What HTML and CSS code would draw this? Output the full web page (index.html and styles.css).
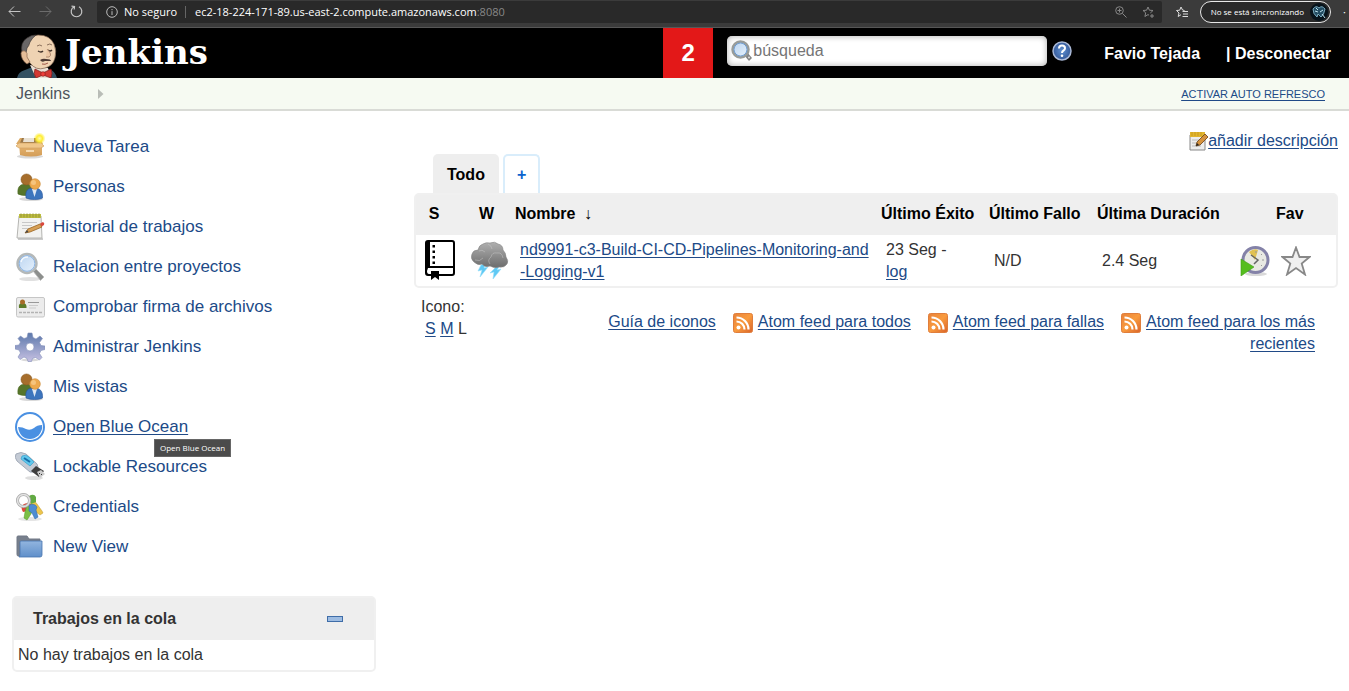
FILE: index.html
```html
<!DOCTYPE html>
<html lang="es">
<head>
<meta charset="utf-8">
<title>Panel de control [Jenkins]</title>
<link rel="stylesheet" href="styles.css">
</head>
<body>
<svg class="defs" width="0" height="0" aria-hidden="true">
  <defs>
    <linearGradient id="g-lens" x1="0" y1="0" x2="1" y2="1"><stop offset="0" stop-color="#b9d3f0"/><stop offset="1" stop-color="#e9f3fc"/></linearGradient>
    <linearGradient id="g-gear" x1="0" y1="0" x2="0" y2="1"><stop offset="0" stop-color="#5c79ab"/><stop offset="1" stop-color="#c6c0e2"/></linearGradient>
    <linearGradient id="g-folder" x1="0" y1="0" x2="0" y2="1"><stop offset="0" stop-color="#92b5df"/><stop offset="1" stop-color="#5f8fca"/></linearGradient>
    <linearGradient id="g-cloud" x1="0" y1="0" x2="0" y2="1"><stop offset="0" stop-color="#b0b0b0"/><stop offset="1" stop-color="#6c6c6c"/></linearGradient>
    <linearGradient id="g-rss" x1="0" y1="0" x2="1" y2="1"><stop offset="0" stop-color="#e8823a"/><stop offset=".5" stop-color="#f99b3e"/><stop offset="1" stop-color="#d9632a"/></linearGradient>
    <linearGradient id="g-box" x1="0" y1="0" x2="0" y2="1"><stop offset="0" stop-color="#e9b872"/><stop offset="1" stop-color="#d39d58"/></linearGradient>
    <radialGradient id="g-glow"><stop offset="0" stop-color="#fffbb0"/><stop offset=".5" stop-color="#ffee35"/><stop offset="1" stop-color="#ffee35" stop-opacity="0"/></radialGradient>
    <radialGradient id="g-help"><stop offset="0" stop-color="#5e8fd0"/><stop offset="1" stop-color="#34599a"/></radialGradient>
    <symbol id="i-people" viewBox="0 0 30 30">
      <ellipse cx="16" cy="27" rx="12" ry="2" fill="#000" opacity=".15"/>
      <path d="M3 22c-1-8 3-10 8-10 6 0 9 4 8 10-4 2-12 2-16 0z" fill="#56752a" stroke="#4a6820" stroke-width=".6"/>
      <circle cx="11.500" cy="7.500" r="5.500" fill="#a66e2c" stroke="#8c5a20" stroke-width=".6"/>
      <path d="M11 26c-1-8 2-10 8-10s9 3 8.500 10c-4 2-12 2-16.500 0z" fill="#3d75bd" stroke="#28569b" stroke-width=".6"/>
      <path d="M17 17l2.500 8 2.500-8z" fill="#dfe8f3"/>
      <circle cx="20" cy="12" r="5.300" fill="#eda94e" stroke="#c98836" stroke-width=".6"/>
      <circle cx="18.500" cy="10.500" r="2.500" fill="#f8cb8a" opacity=".8"/>
    </symbol>
    <symbol id="i-note" viewBox="0 0 30 30">
      <path d="M3 27h25" stroke="#999" stroke-width="2" opacity=".5"/>
      <path d="M4 4h22l1 22H2z" fill="#f2f2f0" stroke="#b5b5b2"/>
      <path d="M4 2h22v4H4z" fill="#bcbc3e"/>
      <path d="M6 1.500v4M9 1.500v4M12 1.500v4M15 1.500v4M18 1.500v4M21 1.500v4M24 1.500v4" stroke="#97953a"/>
      <path d="M7 10.500h15M7 13.500h10M7 16.500h8" stroke="#c8c8c8"/>
      <path d="M10 21l3-4 12-5 2 3-12 5z" fill="#d7a055" stroke="#99631f" stroke-width=".8"/>
      <path d="M10 21l2-3 1.500 2z" fill="#444"/>
      <path d="M25 11.500l3-1.500q2 1 1 3l-2.500 1.500z" fill="#d9483c"/>
    </symbol>
    <symbol id="i-lens" viewBox="0 0 30 30">
      <ellipse cx="15" cy="27" rx="11" ry="2" fill="#000" opacity=".12"/>
      <path d="M18 19l3-2 8 8-3.500 3.500z" fill="#8d8f8d" stroke="#bbb" stroke-width=".8"/>
      <circle cx="12" cy="11.500" r="9.500" fill="url(#g-lens)" stroke="#b4b8b8" stroke-width="2.400"/>
      <circle cx="12" cy="11.500" r="7.800" fill="none" stroke="#8db5e4" stroke-width="1"/>
      <path d="M6 10q1-5 7-5" fill="none" stroke="#fff" stroke-width="1.500" opacity=".8"/>
    </symbol>
    <symbol id="i-rss" viewBox="0 0 20 20">
      <rect x=".5" y=".5" width="19" height="19" rx="2" fill="url(#g-rss)" stroke="#e07e3c"/>
      <circle cx="5.500" cy="14.500" r="2" fill="#fff"/>
      <path d="M3.500 8.500a8 8 0 0 1 8 8M3.500 4.500a12 12 0 0 1 12 12" fill="none" stroke="#fff" stroke-width="2.200"/>
    </symbol>
  </defs>
</svg>

<div class="browser">
  <div class="nav-buttons">
    <button class="chrome-btn" aria-label="Atrás"><svg width="13" height="13" viewBox="0 0 13 13" fill="none" stroke="#c4c4c4"><path d="M12.500 6.500H1M6 1.500l-5 5 5 5"/></svg></button>
    <button class="chrome-btn" aria-label="Adelante"><svg width="13" height="13" viewBox="0 0 13 13" fill="none" stroke="#6c6c6c"><path d="M.5 6.500H12M7 1.500l5 5-5 5"/></svg></button>
    <button class="chrome-btn" aria-label="Actualizar"><svg width="13" height="13" viewBox="0 0 13 13" fill="none" stroke="#c8c8c8" stroke-width="1.200"><path d="M9 1.800a5.300 5.300 0 1 1-5 0M1.500 1.200l3 .3-.3 3"/></svg></button>
  </div>
  <div class="address">
    <svg width="12" height="12" viewBox="0 0 12 12" fill="none" stroke="#bbb"><circle cx="6" cy="6" r="5.300"/><path d="M6 5.200V9M6 3v1.200"/></svg>
    <span class="insecure">No seguro</span>
    <span class="divider"></span>
    <span class="url">ec2-18-224-171-89.us-east-2.compute.amazonaws.com<span class="port">:8080</span></span>
    <span class="address-tools">
      <svg width="12" height="12" viewBox="0 0 12 12" fill="none" stroke="#888"><circle cx="4.500" cy="4.500" r="3.800"/><path d="M7.500 7.500L11.500 11.500M2.500 4.500h4M4.500 2.500v4"/></svg>
      <svg width="12" height="12" viewBox="0 0 12 12" fill="none" stroke="#888"><path d="M9 7.200l-.4-.4L11 4.500l-3.600-.3L6 1 4.600 4.200 1 4.500l2.700 2.300-.8 3.700L6 8.600l1 .6M8 10h4M10 8v4"/></svg>
    </span>
  </div>
  <button class="chrome-btn fav" aria-label="Favoritos"><svg width="12" height="12" viewBox="0 0 12 12" fill="none" stroke="#ddd"><path d="M8.500 4.500L6.500 4 5 1 3.700 4.200.5 4.500 3 7l-.8 3.500L5 8.700M6.500 5.500H12M7 8h5M6.500 10.500H12"/></svg></button>
  <button class="profile"><span>No se está sincronizando</span><svg width="18" height="18" viewBox="0 0 18 18"><circle cx="9" cy="9" r="9" fill="#07131b"/><path d="M3 6q3-4 6-1 3-3 6 1-1 6-4 8l-3-3-1 3Q3 11 3 6z" fill="#234d63" stroke="#79a9bd"/><path d="M5 8l3 1M10 9l3-2M6 5l2 2M12 11l3 4" stroke="#bde3ef"/></svg></button>
  <span class="more">·</span>
</div>

<header class="header">
  <a class="brand" href="#" aria-label="Jenkins">
    <svg width="44" height="45" viewBox="0 0 44 45">
      <path d="M1 45q1-6 8-8l10-4 14 3q6 2 8 9z" fill="#335061"/>
      <path d="M14 32l6 13h14l-2-10z" fill="#e9dfd5"/>
      <path d="M8 14Q10 3 22 2q12 0 16 9 3 7 1 14-2 8-10 10-9 3-15-5l-5-8q-2-4-1-8z" fill="#efd3b3" stroke="#7a5d49" stroke-width=".7"/>
      <path d="M6 20Q4 9 11 5q4-3 9-3-4 3-6 7-1 4-3 6l-1 5-4 1z" fill="#696666" stroke="#3d3735" stroke-width=".7"/>
      <path d="M5 20q1-3 4-2 3 2 2 6l3 5-3 2q-6-4-6-11z" fill="#e5bd98" stroke="#8a6850" stroke-width=".7"/>
      <path d="M21 13q3-2 5 0M31 12q3-2 5 0" fill="none" stroke="#8b705c"/>
      <path d="M22 18q3 2 5 0M32 17q2 2 4 0" fill="none" stroke="#43342b" stroke-width="1.400"/>
      <path d="M31 16q6 6 2 8h-3" fill="#edc8a5" stroke="#a57f66" stroke-width=".8"/>
      <path d="M24 27q3-2 6-1 5 0 5 2-4 0-6 0-3 2-5-1z" fill="#4d3a34"/>
      <path d="M26 31q3 1 6-1" fill="none" stroke="#a0584a"/>
      <path d="M19 36l8 4 8-4q2 4 0 9l-8-3-7 3q-3-4-1-9z" fill="#d33833" stroke="#7a1918" stroke-width=".7"/>
      <circle cx="27" cy="41" r="2.300" fill="#ef3d3a" stroke="#8e211d" stroke-width=".7"/>
    </svg>
    <span>Jenkins</span>
  </a>
  <a class="alerts" href="#" aria-label="2 avisos">2</a>
  <form class="search">
    <label class="search-box"><svg width="22" height="22" viewBox="0 0 22 22"><path d="M13 15l3-3 5 6-3 3z" fill="#858585"/><circle cx="18" cy="17.500" r="1" fill="#ddd"/><circle cx="9.500" cy="9.500" r="8" fill="url(#g-lens)" stroke="#999c99" stroke-width="2.500"/><circle cx="9.500" cy="9.500" r="6.500" fill="none" stroke="#6d9bd0"/></svg>
    <input type="text" placeholder="búsqueda" aria-label="búsqueda"></label>
    <a class="help" href="#" aria-label="Ayuda"><svg width="20" height="20" viewBox="0 0 20 20"><circle cx="10" cy="10" r="9" fill="url(#g-help)" stroke="#a9b8d6" stroke-width="1.500"/><path d="M7 7.500q0-3 3-3t3 2.700q0 1.500-1.500 2.300T10 12" fill="none" stroke="#fff" stroke-width="2"/><circle cx="10" cy="14.800" r="1.300" fill="#fff"/></svg></a>
  </form>
  <nav class="user"><a href="#">Favio Tejada</a><span class="logout">| <a href="#">Desconectar</a></span></nav>
</header>

<div class="crumbs">
  <nav class="crumb"><a href="#">Jenkins</a><svg width="6" height="10" viewBox="0 0 6 10"><path d="M0 0l5.500 5L0 10z" fill="#b9bdb7"/></svg></nav>
  <a class="refresh" href="#">ACTIVAR AUTO REFRESCO</a>
</div>

<div class="page">
  <aside class="side">
    <nav class="tasks">
      <a class="task" href="#"><svg viewBox="0 0 30 30"><ellipse cx="15" cy="24.500" rx="13" ry="2" fill="#000" opacity=".15"/><path d="M4 11h23v12q-11 3-22 0z" fill="url(#g-box)"/><path d="M5 6h20l3 6H1z" fill="#dca962"/><path d="M7 6h17l1 5H5z" fill="#9b7748"/><path d="M9 6h10v4H8z" fill="#e9e2d5"/><path d="M4 11l-3 3 3 2h22l3-2-3-3z" fill="#f0c78b" stroke="#d3a566" stroke-width=".7"/><path d="M11 19h8" stroke="#f5dab2" stroke-width="2"/><circle cx="24.500" cy="6.500" r="6" fill="url(#g-glow)"/></svg><span>Nueva Tarea</span></a>
      <a class="task" href="#"><svg><use href="#i-people"/></svg><span>Personas</span></a>
      <a class="task" href="#"><svg><use href="#i-note"/></svg><span>Historial de trabajos</span></a>
      <a class="task" href="#"><svg><use href="#i-lens"/></svg><span>Relacion entre proyectos</span></a>
      <a class="task" href="#"><svg viewBox="0 0 30 30"><rect x="1.500" y="5.500" width="28" height="19.500" rx="1.500" fill="#ececec" stroke="#c6c6c6"/><path d="M4 16q-1-5 3.500-5t4 5z" fill="#5e7c2a"/><circle cx="7.500" cy="10" r="2.500" fill="#a86c28"/><path d="M13 10.500h11" stroke="#999"/><path d="M14 13.500h9M14 16h7" stroke="#ccc"/><path d="M4 20.500h23" stroke="#b3b3b3" stroke-width="1.500" stroke-dasharray="3 1"/></svg><span>Comprobar firma de archivos</span></a>
      <a class="task" href="#"><svg viewBox="0 0 30 30"><ellipse cx="15" cy="28" rx="9" ry="1.500" fill="#000" opacity=".15"/><path fill-rule="evenodd" d="M13 1h4l1 4.500 3 1.500 4-3 2.500 2.500-3 4 1.500 3 4 .5v3.500l-4 1-1.500 3 2.500 4-2.500 2.500-4-2.500-3 1-1 3h-3.500l-1-3-3-1.500-4 2.500L3 25l2.500-4L4 18l-4-1v-3.500L4 13l1.500-3L3 6.500 5.500 4 9 6.500l3-1zM15 11a4 4 0 1 0 0 8 4 4 0 0 0 0-8z" fill="url(#g-gear)" stroke="#8390bb" stroke-width=".6"/></svg><span>Administrar Jenkins</span></a>
      <a class="task" href="#"><svg><use href="#i-people"/></svg><span>Mis vistas</span></a>
      <a class="task current" href="#"><svg viewBox="0 0 30 30"><circle cx="15" cy="15" r="14" fill="#fff" stroke="#4a90e2" stroke-width="2"/><path d="M3 15q5 0 8 2 4 2 8-1 3-3 8-3 1 5-3.500 10.500Q19 27 15 27 5 27 3 15z" fill="#4a90e2"/></svg><span>Open Blue Ocean</span><span class="tooltip">Open Blue Ocean</span></a>
      <a class="task" href="#"><svg viewBox="0 0 30 30"><ellipse cx="19" cy="26" rx="9" ry="2" fill="#000" opacity=".13"/><path d="M1 2q5-3 10 0l11 10q2 3 0 6-3 3-7 2L2 9Q-1 5 1 2z" fill="#c4cbd5" stroke="#a4acb9"/><path d="M7 4q4-2 7 1l5 5-4 4-9-7z" fill="#60c7ec" stroke="#2b9ac9" stroke-width=".6"/><path d="M9 6l6 4" stroke="#176da8" stroke-width="2"/><path d="M16 19l5-5 8 5-5 6z" fill="#3e3e3e"/><path d="M22 20l4-2 4 4-5 4z" fill="#ccc"/><path d="M24 21l1 1M26 23l1-1" stroke="#333"/></svg><span>Lockable Resources</span></a>
      <a class="task" href="#"><svg viewBox="0 0 30 30"><ellipse cx="15" cy="27" rx="12" ry="2" fill="#000" opacity=".1"/><path d="M15 10q5-2 7 2l5 7 1 2-3 2-4-3-5-5z" fill="#edc54c" stroke="#bd962a" stroke-width=".5"/><path d="M7 18q-2-6 6-7l4 2-4 6-5 1z" fill="#dc493b"/><path d="M12 13l6 2-2 7-4 6-3-2 1-6z" fill="#7cbf45" stroke="#4e9826" stroke-width=".5"/><path d="M14 13q6-2 8 2l-1 3 2 7-3 2-3-6-3-2z" fill="#4d8cd2" stroke="#2b63a4" stroke-width=".5"/><path d="M14 4q5-3 7 1v5l-5 2z" fill="#62aa43"/><circle cx="8.500" cy="8.500" r="6" fill="none" stroke="#a8a8a8" stroke-width="3"/><circle cx="8.500" cy="8.500" r="6" fill="none" stroke="#e2e2e2" stroke-width="1.500"/></svg><span>Credentials</span></a>
      <a class="task" href="#"><svg viewBox="0 0 30 30"><path d="M2 5q0-1 1-1h9l2 3h11v17H3q-1 0-1-2z" fill="#777f8c" stroke="#717986"/><path d="M5 10q0-1 1-1h21v14q0 2-2 2H4q1-1 1-3z" fill="url(#g-folder)" stroke="#4775ae" stroke-width=".8"/></svg><span>New View</span></a>
    </nav>
    <section class="queue">
      <div class="queue-head"><h2>Trabajos en la cola</h2><button class="collapse" aria-label="Contraer"></button></div>
      <p>No hay trabajos en la cola</p>
    </section>
  </aside>

  <main class="main">
    <a class="describe" href="#"><svg width="19" height="20" viewBox="0 0 19 20"><path d="M1 4h15v15H1z" fill="#ededed" stroke="#888"/><path d="M1 1h15v5H1z" fill="#e1b52e"/><path d="M3 1v4M6 1v4M9 1v4M12 1v4" stroke="#c99b1c"/><path d="M3 9h7M3 12h5M3 15h9" stroke="#bbb"/><path d="M7 15l1-4 8-8 3 3-8 8z" fill="#d6923d" stroke="#694016" stroke-width=".8"/><path d="M7 15l1-3 2 2z" fill="#222"/></svg><span>añadir descripción</span></a>
    <nav class="tabs"><a class="tab active" href="#">Todo</a><a class="tab add" href="#" aria-label="Nueva vista">+</a></nav>
    <div class="table-wrap">
      <table class="jobs">
        <colgroup><col class="c-s"><col class="c-w"><col><col class="c-date"><col class="c-date"><col class="c-dur"><col class="c-run"><col class="c-fav"></colgroup>
        <thead><tr><th class="c s">S</th><th class="c">W</th><th>Nombre <span class="sort">↓</span></th><th>Último Éxito</th><th>Último Fallo</th><th>Última Duración</th><th></th><th>Fav</th></tr></thead>
        <tbody><tr>
          <td class="icon"><svg width="32" height="41" viewBox="0 0 32 41"><path fill-rule="evenodd" d="M4 0h24q3 0 3 3v30q0 3-3 3H15v4l-4-3-4 3v-4H4q-3 0-3-3V3q0-3 3-3zM6 2h22q1 0 1 1v23H6zM4 28h25v5q0 1-1 1H15v-3H7v3H5q-2 0-2-3z" fill="#000"/><path d="M8.500 5h2.500v2.500H8.500zM8.500 10.500h2.500V13H8.500zM8.500 16h2.500v2.500H8.500zM8.500 21.500h2.500V24H8.500z"/></svg></td>
          <td class="icon weather"><svg width="38" height="39" viewBox="0 0 38 39"><path d="M10 24l5-2-2 5 4-1-8 10 2-7-4 1zM24 27l5-3-3 5 4-1-8 10 1-7-4 1z" fill="#5fc9f4" stroke="#94ddfa" stroke-width=".6"/><path d="M3 21q-4-3-2-8 1-4 6-4 1-5 5-6 3-2 7-1 5-2 8 1 5 1 5 6 3 3 3 7 3 4 1 7-3 4-8 3-4 2-9-1-5 2-8-2-4 2-8-2z" fill="url(#g-cloud)" stroke="#858585" stroke-width=".6"/><path d="M8 10q3-2 6 1M17 3q4 2 4 5M19 23q-3-4 1-7 1-5 6-4 5-1 6 5M4 19q5 2 8-2" fill="none" stroke="#ccc" opacity=".45"/></svg></td>
          <td class="name"><a href="#">nd9991-c3-Build-CI-CD-Pipelines-Monitoring-and<br>-Logging-v1</a></td>
          <td>23 Seg -<br><a href="#">log</a></td><td>N/D</td><td>2.4 Seg</td>
          <td class="icon"><button class="icon-btn" aria-label="Programar ejecución"><svg width="30" height="30" viewBox="0 0 30 30"><ellipse cx="16" cy="28" rx="11" ry="2" fill="#000" opacity=".15"/><circle cx="15.500" cy="14" r="12.500" fill="#e8e9e3" stroke="#8482a8" stroke-width="3"/><path d="M15 14L9 6q5-4 9-2z" fill="#e1c253"/><path d="M11 9l7 5-4 4" fill="none" stroke="#666" stroke-width="1.500"/><path d="M16 5v2M24 14h-2M22 8l-1 1M22 20l-1-1" stroke="#999"/><path d="M1 13l13 8-13 9z" fill="#55bd1e" stroke="#3f9d17" stroke-width=".6"/></svg></button></td>
          <td class="icon star"><button class="icon-btn" aria-label="Favorito"><svg width="30" height="30" viewBox="0 0 30 30"><path d="M15 1.500l3.500 9.500H28.500l-7.800 6.500L24 28.500l-9-6.500-9 6.500 3.300-11L1.500 11h10z" fill="#f0f0f0" stroke="#888" stroke-width="1.800"/></svg></button></td>
        </tr></tbody>
      </table>
    </div>
    <footer class="legend">
      <div class="sizes">Icono:<div><a href="#">S</a> <a href="#">M</a> L</div></div>
      <div class="feeds"><a href="#">Guía de iconos</a><svg width="20" height="20"><use href="#i-rss"/></svg><a href="#">Atom feed para todos</a><svg width="20" height="20"><use href="#i-rss"/></svg><a href="#">Atom feed para fallas</a><svg width="20" height="20"><use href="#i-rss"/></svg><a href="#">Atom feed para los más recientes</a></div>
    </footer>
  </main>
</div>
</body>
</html>
```
FILE: styles.css
```css
* { box-sizing: border-box; }
body {
  margin: 0;
  background: #fff;
  color: #333;
  font: 16px/22px "Liberation Sans", Arial, sans-serif;
  overflow-x: hidden;
}
a { color: #204a87; text-underline-offset: 2px; }
button { padding: 0; border: 0; background: none; color: inherit; font: inherit; cursor: pointer; }
svg { flex: none; }
.defs { position: absolute; }

/* Browser bar */
.browser {
  display: flex;
  align-items: center;
  height: 28px;
  padding: 0 0 4px;
  background: #3b3b3b;
  border-bottom: 1px solid #575757;
  color: #fff;
  font: 11px/16px "Open Sans", "Noto Sans", sans-serif;
}
.nav-buttons { display: flex; gap: 18px; padding: 0 14px 0 8px; }
.chrome-btn { display: flex; }
.address {
  flex: 1;
  display: flex;
  align-items: center;
  height: 22px;
  padding: 0 8px 0 9px;
  background: #292929;
  border-radius: 2px;
  white-space: nowrap;
}
.insecure { margin-left: 6px; }
.divider { width: 1px; height: 12px; margin: 0 9px 0 8px; background: #666; }
.port { color: #888; }
.address-tools { display: flex; gap: 15px; margin-left: auto; }
.fav { margin: 0 12px 0 14px; }
.profile {
  display: flex;
  align-items: center;
  gap: 6px;
  height: 22px;
  padding: 0 2px 0 10px;
  border: 1px solid #e8e8e8;
  border-radius: 11px;
  background: #292929;
  font-size: 8px;
  white-space: nowrap;
}
.more { width: 6px; margin-left: 12px; }

/* Header */
.header { display: flex; align-items: center; height: 50px; background: #000; color: #fff; }
.header a { color: #fff; text-decoration: none; }
.brand { display: flex; align-items: center; height: 50px; padding-left: 16px; gap: 5px; font: bold 34px/48px "DejaVu Serif", serif; }
.brand svg { align-self: flex-end; }
.brand span { align-self: flex-start; }
.alerts { width: 50px; margin-left: auto; background: #e31818; font-size: 24px; font-weight: bold; line-height: 50px; text-align: center; }
.search { display: flex; align-items: center; gap: 5px; margin: 0 0 4px 14px; }
.search-box { display: flex; align-items: center; width: 320px; height: 30px; padding: 0 4px; border-radius: 5px; background: #fff; box-shadow: inset 0 0 6px #aaa; }
.search input { flex: 1; min-width: 0; padding: 0; border: 0; outline: 0; background: none; font: inherit; }
.search input::placeholder { color: #757575; }
.help { display: flex; }
.user { display: flex; gap: 26px; padding: 2px 18px 0 32px; font-weight: bold; white-space: nowrap; }

/* Breadcrumbs */
.crumbs { display: flex; align-items: center; justify-content: space-between; height: 33px; padding: 0 24px 0 16px; background: #f6faf2; border-bottom: 2px solid #d9dbd6; }
.crumb { display: flex; align-items: center; gap: 28px; }
.crumb a { color: #4d545d; text-decoration: none; }
.refresh { font-size: 11px; }

/* Page */
.page { display: grid; grid-template-columns: 364px minmax(0, 1fr); gap: 38px; padding: 15px 11px 20px 12px; }
.tasks { display: flex; flex-direction: column; padding-top: 1px; }
.task { position: relative; display: flex; align-items: center; align-self: flex-start; gap: 8px; height: 40px; padding-left: 3px; font-size: 17px; text-decoration: none; }
.task svg { width: 30px; height: 30px; }
.current { text-decoration: underline; }
.tooltip {
  position: absolute;
  top: 32px;
  left: 142px;
  z-index: 1;
  padding: 0 5px;
  border: 1px solid #666;
  background: #4b4b4b;
  color: #fff;
  font: 8px/16px "Open Sans", "Noto Sans", sans-serif;
  text-decoration: none;
  white-space: nowrap;
}
.queue { margin-top: 29px; border: 2px solid #f0f0f0; border-radius: 5px; }
.queue-head { display: flex; align-items: center; justify-content: space-between; height: 42px; padding: 0 31px 0 19px; background: #eee; }
.queue h2 { margin: 0; font-size: 16px; }
.collapse { width: 16px; height: 6px; border: 1px solid #3f6da8; background: #9dbce2; }
.queue p { margin: 0; padding: 4px; }

.main { padding-top: 4px; }
.describe { display: flex; align-items: center; justify-content: flex-end; white-space: nowrap; }
.tabs { display: flex; gap: 4px; margin-top: 2px; padding-left: 19px; }
.tab { height: 39px; border-radius: 5px 5px 0 0; padding: 0 14px; color: #000; font-weight: bold; line-height: 42px; text-decoration: none; }
.active { background: #eee; }
.add { padding: 0 12px; border: 2px solid #d9edfb; border-bottom: 0; color: #0b63ce; line-height: 38px; }
.table-wrap { border: 2px solid #f0f0f0; border-radius: 5px; }
.jobs { width: 100%; border-collapse: collapse; table-layout: fixed; }
.c-s { width: 48px; }
.c-w { width: 45px; }
.c-date { width: 108px; }
.c-dur { width: 149px; }
.c-run { width: 30px; }
.c-fav { width: 66px; }
.jobs th { height: 40px; padding: 0 0 2px 6px; background: #efefef; color: #000; text-align: left; white-space: nowrap; }
.jobs th.c { padding-left: 0; text-align: center; }
.jobs th.s { padding-right: 12px; }
.sort { margin-left: 4px; font-weight: normal; }
.jobs td { height: 51px; padding: 0 0 0 11px; white-space: nowrap; }
.jobs td.icon { padding: 0; text-align: center; }
.jobs td.weather { padding-left: 7px; }
.jobs td.star { padding-right: 14px; }
.icon svg { display: inline-block; vertical-align: middle; }
.legend { display: flex; justify-content: space-between; padding: 8px 23px 0 7px; }
.sizes div { padding-left: 4px; }
.feeds { max-width: 730px; padding-top: 15px; text-align: right; }
.feeds svg { margin: 0 5px 0 17px; vertical-align: -6px; }
```
